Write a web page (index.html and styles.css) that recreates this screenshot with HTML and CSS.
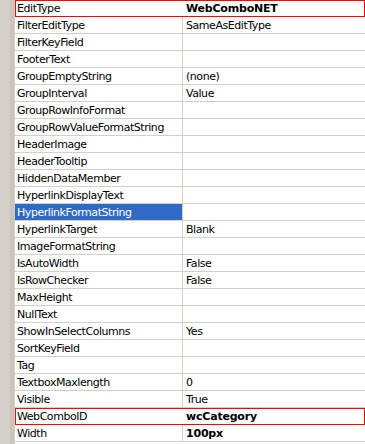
FILE: index.html
```html
<!DOCTYPE html>
<html>
<head>
<meta charset="utf-8">
<link rel="stylesheet" href="styles.css">
</head>
<body>
<div class="grid">
  <div class="gutter"></div>
  <div class="rows">
    <div class="row marked"><div class="name">EditType</div><div class="value bold">WebComboNET</div></div>
    <div class="row"><div class="name">FilterEditType</div><div class="value">SameAsEditType</div></div>
    <div class="row"><div class="name">FilterKeyField</div><div class="value"></div></div>
    <div class="row"><div class="name">FooterText</div><div class="value"></div></div>
    <div class="row"><div class="name">GroupEmptyString</div><div class="value">(none)</div></div>
    <div class="row"><div class="name">GroupInterval</div><div class="value">Value</div></div>
    <div class="row"><div class="name">GroupRowInfoFormat</div><div class="value"></div></div>
    <div class="row"><div class="name">GroupRowValueFormatString</div><div class="value"></div></div>
    <div class="row"><div class="name">HeaderImage</div><div class="value"></div></div>
    <div class="row"><div class="name">HeaderTooltip</div><div class="value"></div></div>
    <div class="row"><div class="name">HiddenDataMember</div><div class="value"></div></div>
    <div class="row"><div class="name">HyperlinkDisplayText</div><div class="value"></div></div>
    <div class="row selected"><div class="name">HyperlinkFormatString</div><div class="value"></div></div>
    <div class="row"><div class="name">HyperlinkTarget</div><div class="value">Blank</div></div>
    <div class="row"><div class="name">ImageFormatString</div><div class="value"></div></div>
    <div class="row"><div class="name">IsAutoWidth</div><div class="value">False</div></div>
    <div class="row"><div class="name">IsRowChecker</div><div class="value">False</div></div>
    <div class="row"><div class="name">MaxHeight</div><div class="value"></div></div>
    <div class="row"><div class="name">NullText</div><div class="value"></div></div>
    <div class="row"><div class="name">ShowInSelectColumns</div><div class="value">Yes</div></div>
    <div class="row"><div class="name">SortKeyField</div><div class="value"></div></div>
    <div class="row"><div class="name">Tag</div><div class="value"></div></div>
    <div class="row"><div class="name">TextboxMaxlength</div><div class="value">0</div></div>
    <div class="row"><div class="name">Visible</div><div class="value">True</div></div>
    <div class="row marked"><div class="name">WebComboID</div><div class="value bold">wcCategory</div></div>
    <div class="row"><div class="name">Width</div><div class="value bold">100px</div></div>
  </div>
</div>
</body>
</html>
```
FILE: styles.css
```css
html, body {
  margin: 0;
  padding: 0;
  background: #ffffff;
}

.grid {
  display: flex;
  width: 365px;
  height: 444px;
  font-family: "DejaVu Sans", sans-serif;
  font-size: 11px;
  letter-spacing: -0.45px;
  color: #000000;
}

.gutter {
  width: 14px;
  flex: none;
  background: linear-gradient(to right, #d4d0c8 0, #d4d0c8 10px, #c9c5bd 10px, #c9c5bd 14px);
  border-right: 1px solid #d4d0c8;
}

.rows {
  flex: 1;
  display: flex;
  flex-direction: column;
}

.row {
  display: grid;
  grid-template-columns: 168px 1fr;
  height: 16px;
  line-height: 17px;
  border-bottom: 1px solid #d4d0c8;
  white-space: nowrap;
}

.name {
  padding-left: 2px;
  border-right: 1px solid #d4d0c8;
  overflow: hidden;
}

.value {
  padding-left: 3px;
  overflow: hidden;
}

.bold {
  font-weight: bold;
  letter-spacing: -0.2px;
}

.selected .name {
  background: #316ac5;
  color: #ffffff;
}

.marked {
  outline: 1px solid #ff0000;
  outline-offset: -1px;
  border-bottom-color: #ff0000;
}

.marked .name {
  border-right-color: transparent;
}
```
